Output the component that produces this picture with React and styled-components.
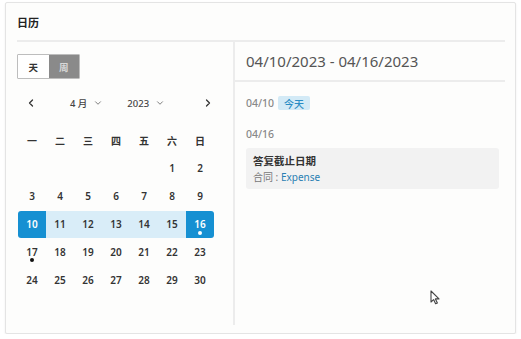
import React from "react";
import styled, { createGlobalStyle } from "styled-components";
import { ChevronLeft, ChevronRight, ChevronDown } from "lucide-react";

const GlobalStyle = createGlobalStyle`
  html, body {
    margin: 0;
    background: #ffffff;
    font-family: "Noto Sans", "Noto Sans CJK SC", sans-serif;
    color: #333;
  }
`;

const weekdays = ["一", "二", "三", "四", "五", "六", "日"];

const weeks = [
  [null, null, null, null, null, 1, 2],
  [3, 4, 5, 6, 7, 8, 9],
  [10, 11, 12, 13, 14, 15, 16],
  [17, 18, 19, 20, 21, 22, 23],
  [24, 25, 26, 27, 28, 29, 30],
];

const selStart = 10;
const selEnd = 16;
const dots = { 16: true, 17: true };

function dayState(d) {
  if (d === selStart) return "start";
  if (d === selEnd) return "end";
  if (d > selStart && d < selEnd) return "mid";
  return "none";
}

export default function App() {
  return (
    <>
      <GlobalStyle />
      <Card>
        <CardHeader>日历</CardHeader>
        <CardBody>
          <LeftPanel>
            <Toggle>
              <ToggleButton>天</ToggleButton>
              <ToggleButton $active>周</ToggleButton>
            </Toggle>
            <NavRow>
              <NavArrow>
                <ChevronLeft size={12} strokeWidth={2.5} />
              </NavArrow>
              <NavCenter>
                <Select>
                  4 月 <ChevronDown size={10} strokeWidth={2} />
                </Select>
                <Select>
                  2023 <ChevronDown size={10} strokeWidth={2} />
                </Select>
              </NavCenter>
              <NavArrow>
                <ChevronRight size={12} strokeWidth={2.5} />
              </NavArrow>
            </NavRow>
            <Grid>
              {weekdays.map((w) => (
                <Weekday key={w}>{w}</Weekday>
              ))}
              {weeks.flat().map((d, i) => (
                <DayCell key={i} $state={d ? dayState(d) : "none"}>
                  {d}
                  {d && dots[d] && <Dot $light={dayState(d) === "end"} />}
                </DayCell>
              ))}
            </Grid>
          </LeftPanel>
          <RightPanel>
            <RangeTitle>04/10/2023 - 04/16/2023</RangeTitle>
            <Agenda>
              <DayLabel>
                04/10 <TodayBadge>今天</TodayBadge>
              </DayLabel>
              <DayLabel $gap>04/16</DayLabel>
              <EventCard>
                <EventTitle>答复截止日期</EventTitle>
                <EventMeta>
                  合同 : <EventLink>Expense</EventLink>
                </EventMeta>
              </EventCard>
            </Agenda>
          </RightPanel>
        </CardBody>
        <Pointer width="11" height="15" viewBox="0 0 11 15">
          <path
            d="M1 1 L1 12 L3.6 9.6 L5.6 13.8 L7.4 13 L5.4 8.9 L9 8.9 Z"
            fill="#fff"
            stroke="#444"
            strokeWidth="1.1"
            strokeLinejoin="round"
          />
        </Pointer>
      </Card>
    </>
  );
}

const Card = styled.div`
  position: relative;
  box-sizing: border-box;
  margin: 2px 0 0 5px;
  width: 511px;
  height: 332px;
  background: #fdfdfc;
  border: 1px solid #e4e4e4;
  border-radius: 2px;
  box-shadow: 0 1px 2px rgba(0, 0, 0, 0.08);
  padding: 0 10px 8px 11px;
  display: flex;
  flex-direction: column;
`;

const CardHeader = styled.div`
  height: 37px;
  display: flex;
  align-items: center;
  font-size: 11px;
  font-weight: 700;
  color: #222;
  border-bottom: 2px solid #ececec;
`;

const CardBody = styled.div`
  flex: 1;
  display: flex;
`;

const LeftPanel = styled.div`
  width: 216px;
  border-right: 2px solid #ececec;
  padding-top: 12px;
`;

const Toggle = styled.div`
  display: flex;
  width: 63px;
  height: 25px;
  border: 1px solid #bdbdbd;
  box-sizing: border-box;
  border-radius: 1px;
  overflow: hidden;
`;

const ToggleButton = styled.div`
  flex: 1;
  display: flex;
  align-items: center;
  justify-content: center;
  font-size: 9.5px;
  font-weight: 700;
  color: ${({ $active }) => ($active ? "#d8d8d8" : "#333")};
  background: ${({ $active }) => ($active ? "#8a8a8a" : "#fff")};
`;

const NavRow = styled.div`
  margin: 12px 0 0 0;
  width: 205px;
  height: 24px;
  display: flex;
  align-items: center;
  justify-content: space-between;
  color: #333;
`;

const NavArrow = styled.div`
  width: 28px;
  display: flex;
  justify-content: center;
  color: #333;
`;

const NavCenter = styled.div`
  display: flex;
  gap: 24px;
  padding-right: 4px;
`;

const Select = styled.div`
  display: flex;
  align-items: center;
  gap: 6px;
  font-size: 9.5px;
  font-weight: 500;
  color: #444;
  svg {
    color: #666;
  }
`;

const Grid = styled.div`
  margin: 11px 0 0 1px;
  width: 196px;
  display: grid;
  grid-template-columns: repeat(7, 28px);
  grid-auto-rows: 28px;
`;

const Weekday = styled.div`
  display: flex;
  align-items: center;
  justify-content: center;
  font-size: 10px;
  font-weight: 700;
  color: #333;
`;

const cellBg = {
  start: "#1690d2",
  end: "#1690d2",
  mid: "#d9edf8",
  none: "transparent",
};

const cellRadius = {
  start: "3px 0 0 3px",
  end: "0 3px 3px 0",
  mid: "0",
  none: "0",
};

const DayCell = styled.div`
  position: relative;
  display: flex;
  align-items: center;
  justify-content: center;
  font-size: 10px;
  font-weight: 600;
  margin: ${({ $state }) => ($state === "none" ? "0" : "0.5px 0")};
  color: ${({ $state }) =>
    $state === "start" || $state === "end" ? "#fff" : "#333"};
  background: ${({ $state }) => cellBg[$state]};
  border-radius: ${({ $state }) => cellRadius[$state]};
`;

const Dot = styled.span`
  position: absolute;
  left: 50%;
  top: 20px;
  width: 4px;
  height: 4px;
  margin-left: -2px;
  border-radius: 50%;
  background: ${({ $light }) => ($light ? "#fff" : "#111")};
`;

const RightPanel = styled.div`
  flex: 1;
  display: flex;
  flex-direction: column;
`;

const RangeTitle = styled.div`
  height: 38px;
  display: flex;
  align-items: center;
  padding-left: 11px;
  font-size: 15px;
  color: #555;
  border-bottom: 2px solid #ececec;
`;

const Agenda = styled.div`
  padding: 14px 6px 0 11px;
`;

const DayLabel = styled.div`
  display: flex;
  align-items: center;
  gap: 4px;
  height: 14px;
  font-size: 10.5px;
  font-weight: 500;
  color: #888;
  margin-top: ${({ $gap }) => ($gap ? "17px" : "0")};
  margin-bottom: ${({ $gap }) => ($gap ? "7px" : "0")};
`;

const TodayBadge = styled.span`
  display: inline-flex;
  align-items: center;
  padding: 0 6px;
  height: 14px;
  border-radius: 2px;
  background: #d3eaf6;
  color: #2a8cc4;
  font-size: 10px;
  font-weight: 500;
`;

const EventCard = styled.div`
  background: #f2f2f2;
  border-radius: 3px;
  padding: 5px 7px 5px;
  display: flex;
  flex-direction: column;
  gap: 1px;
`;

const EventTitle = styled.div`
  font-size: 10.5px;
  font-weight: 700;
  color: #333;
`;

const EventMeta = styled.div`
  font-size: 10px;
  color: #777;
`;

const EventLink = styled.span`
  color: #2a7fb3;
`;

const Pointer = styled.svg`
  position: absolute;
  left: 424px;
  top: 287px;
`;
